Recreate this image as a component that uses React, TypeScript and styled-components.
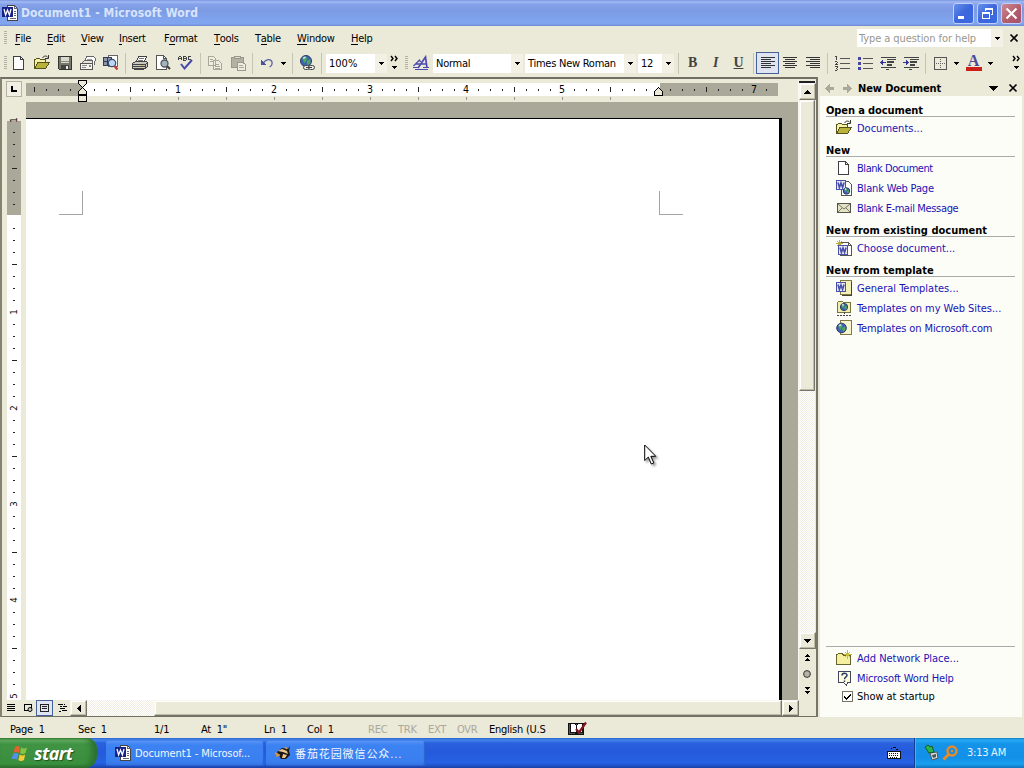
import React from 'react';
import styled, { createGlobalStyle, css } from 'styled-components';

const face = '#ebe9d8';
const ui = '"DejaVu Sans Condensed", "DejaVu Sans", "Noto Sans CJK SC", sans-serif';

const Global = createGlobalStyle`
  * { box-sizing: border-box; }
  html, body { margin: 0; padding: 0; }
  body { width: 1024px; height: 768px; overflow: hidden; background: ${face};
    font-family: ${ui}; font-size: 11px; letter-spacing: -0.25px; color: #000; cursor: default; }
`;

const Screen = styled.div`
  position: relative; width: 1024px; height: 768px; display: flex; flex-direction: column; overflow: hidden;
`;

/* ---------- shared ---------- */
const Glyph = styled.svg`
  display: block; flex: none; overflow: visible;
`;
const Label = styled.span<{ $ls?: number }>`
  white-space: pre; letter-spacing: ${p => p.$ls ?? -0.25}px;
`;
const dither = css`
  background: repeating-conic-gradient(#fff 0 25%, #f1eee3 0 50%) 0 0 / 2px 2px;
`;
const raised = css`
  background: ${face}; border: 1px solid; border-color: #f8f7f0 #77756a #77756a #f8f7f0;
  box-shadow: inset -1px -1px 0 #bdbaa8, inset 1px 1px 0 #fff;
`;

type IconProps = { children: React.ReactNode; w?: number; h?: number; smooth?: boolean };
const Icon = ({ children, w = 16, h = 16, smooth }: IconProps) => (
  <Glyph width={w} height={h} viewBox={`0 0 ${w} ${h}`} shapeRendering={smooth ? 'auto' : 'crispEdges'}>{children}</Glyph>
);

const Down = ({ big }: { big?: boolean }) => (
  <Icon w={9} h={5}><path d={big ? 'M0 0h9v1H0zM1 1h7v1H1zM2 2h5v1H2zM3 3h3v1H3zM4 4h1v1H4z' : 'M2 1h5v1H2zM3 2h3v1H3zM4 3h1v1H4z'} /></Icon>
);

/* ---------- icons ---------- */
const WordMark = ({ x = 0, y = 2, c = '#1c2a8c' }) => (
  <g>
    <rect x={x + 0.5} y={y + 0.5} width="9" height="9" fill="#e8eaf8" stroke={c} />
    <path d={`M${x + 2} ${y + 2.5}l1.400 5 1.600-4.500 1.600 4.500 1.500-5`} fill="none" stroke={c} strokeWidth="1.600" shapeRendering="auto" />
  </g>
);
const WordLogo = () => (
  <Icon>
    <path d="M5.500.5h7l3 3v12h-10z" fill="#fff" stroke="#444" />
    <path d="M12.500.5v3h3M12 6h2M12 8h2M12 10h2M8 13h6" fill="none" stroke="#667" />
    <rect x="0" y="2" width="11" height="10" fill="#16228a" />
    <path d="M2 4l1.600 6L5.500 5l1.900 5L9 4" fill="none" stroke="#fff" strokeWidth="1.300" shapeRendering="auto" />
  </Icon>
);
const PageIcon = () => (
  <Icon><path d="M2.500 1.500h7l3 3v10h-10z" fill="#fff" stroke="#3f3f46" /><path d="M9.500 1.500v3h3" fill="none" stroke="#3f3f46" /></Icon>
);
const FolderOpen = () => (
  <Icon>
    <path d="M.5 13.500v-9h1l1-1h3l1 1h5v3" fill="#f5f2a8" stroke="#55521c" />
    <path d="M.5 13.500l3.500-6h11.500l-4 6z" fill="#b9b33c" stroke="#55521c" />
    <path d="M8.500 3c1.500-2.500 4-2.500 5.500-.5M14.500 0v3.500H11" fill="none" stroke="#333" shapeRendering="auto" />
  </Icon>
);
const SaveIcon = () => (
  <Icon>
    <path d="M1.500 1.500h13v13h-12l-1-1z" fill="#77786b" stroke="#35352f" />
    <rect x="4" y="2" width="8" height="6" fill="#d9d8cd" /><path d="M4 6.500h8" stroke="#8a8a7d" />
    <rect x="4" y="10" width="8" height="4" fill="#45453f" /><rect x="9" y="11" width="2" height="3" fill="#eee" />
  </Icon>
);
const MailIcon = () => (
  <Icon>
    <path d="M4.500 6.500l2-5h7l2 2-1.500 7" fill="#fff" stroke="#666" /><path d="M7 4h5M6 6h5" stroke="#999" />
    <path d="M1.500 8.500l3-3h8v3z" fill="#e5e5df" stroke="#666" />
    <path d="M.5 8.500h12v6H.5z" fill="#f4f4ee" stroke="#555" /><path d="M2 10.500h5M2 12.500h4" stroke="#888" /><path d="M9 10h2v2H9z" fill="#888" />
  </Icon>
);
const SearchIcon = () => (
  <Icon>
    <path d="M5.500.5h9v11h-9z" fill="#fff" stroke="#666" />
    <path d="M.5 2.500h8v8h-8z" fill="#8c96a6" stroke="#333c58" /><path d="M1 6.500h7M4.500 3v7" stroke="#2c3672" />
    <circle cx="9" cy="8" r="3.700" fill="#b9d7f4" stroke="#3a4a6a" strokeWidth="1.200" shapeRendering="auto" />
    <path d="M11.500 11l3 3.500" stroke="#c43a38" strokeWidth="2.400" shapeRendering="auto" />
  </Icon>
);
const PrintIcon = () => (
  <Icon>
    <path d="M4.500 6.500l2-5h8l-2 5z" fill="#fff" stroke="#444" /><path d="M7 3.500h5M6 5.500h5" stroke="#777" />
    <path d="M.5 8.500l3-2h10.500l1.500 1v4l-2 2H.5z" fill="#c9c8bc" stroke="#444" />
    <path d="M1 9.500h12.500l2-2M13.500 9.500v4M1 11.500h12" fill="none" stroke="#444" />
    <path d="M2.500 13.500h9v1h-9z" fill="#fff" stroke="#444" /><path d="M9 10h2v1H9z" fill="#d2b73a" />
  </Icon>
);
const PreviewIcon = () => (
  <Icon>
    <path d="M1.500.5h7l3 3v11h-10z" fill="#fff" stroke="#555" /><path d="M8.500.5v3h3" fill="none" stroke="#555" />
    <circle cx="9.500" cy="8.500" r="3.500" fill="#9fb4c0" stroke="#555" strokeWidth="1.300" shapeRendering="auto" />
    <path d="M12 11l3 3" stroke="#444" strokeWidth="2.200" shapeRendering="auto" />
  </Icon>
);
const SpellIcon = () => (
  <Icon>
    <path d="M.5 5V2.500l1-1h1l1 1V5M.5 3.500h3M5.500 5V1M5 1.500h2.500M5 3H8M5 5h2.500M8 1.500v1M8.500 3v2M13 1.500h-2l-1 1v1l1 1h2" fill="none" stroke="#444" />
    <path d="M3 9l3.500 4.500L14 5" fill="none" stroke="#4848a8" strokeWidth="2" shapeRendering="auto" />
  </Icon>
);
const CopyIcon = () => (
  <Icon>
    <path d="M1.500 1.500h5l2 2v7h-7zM6.500 5.500h5l3 3v6h-8z" fill="#efede0" stroke="#aaa797" />
    <path d="M3 4.500h3M3 6.500h3M8 9.500h4M8 11.500h5M8 13h5" stroke="#aaa797" />
  </Icon>
);
const PasteIcon = () => (
  <Icon>
    <path d="M1.500 2.500h12v10h-12z" fill="#b4b1a2" stroke="#99968a" /><path d="M4.500 3.500v-2h6v2z" fill="#dedccd" stroke="#99968a" />
    <path d="M7.500 7.500h5l3 2v6h-8z" fill="#efede0" stroke="#99968a" /><path d="M9 10.500h4M9 12.500h5" stroke="#aaa797" />
  </Icon>
);
const UndoIcon = () => (
  <Icon>
    <path d="M4 8.500C7 3.500 12 3.500 13 7c.5 2.500-.5 4-2.500 5" fill="none" stroke="#5a62a0" strokeWidth="1.300" shapeRendering="auto" />
    <path d="M2 5v5h5z" fill="#4a5298" />
  </Icon>
);
const Globe = ({ cx = 7, cy = 6, r = 5.5 }) => (
  <g shapeRendering="auto">
    <circle cx={cx} cy={cy} r={r} fill="#3f63b4" stroke="#2c3a66" />
    <path d={`M${cx - r * 0.7} ${cy - r * 0.5}l${r * 0.7}-${r * 0.4} ${r * 0.2} ${r * 0.6}-${r * 0.5} ${r * 0.7}zM${cx + r * 0.1} ${cy}l${r * 0.7}-${r * 0.3}v${r * 0.7}l-${r * 0.5} ${r * 0.4}z`} fill="#4ea65e" />
    <path d={`M${cx - r * 0.5} ${cy - r * 0.5}l${r * 0.4}-${r * 0.2}`} stroke="#d8eefc" strokeWidth="1.500" />
  </g>
);
const LinkIcon = () => (
  <Icon>
    <Globe />
    <g fill="#e8e8e4" stroke="#444" shapeRendering="auto"><rect x="4.500" y="10.500" width="6" height="4" rx="2" /><rect x="9.500" y="10.500" width="6" height="4" rx="2" /><path d="M7 12.500h6" /></g>
  </Icon>
);
const StyleIcon = () => (
  <Icon>
    <g fill="none" stroke="#4a4ab0" strokeWidth="1.700" shapeRendering="auto">
      <path d="M5 13L12.500 2l1.500 11M7.500 9h6" /><path d="M.5 11L6.500 5l1 2M3 9h4" strokeWidth="1.300" />
    </g>
    <path d="M0 12.500h6M10 12.500h6M2 14.500h13" stroke="#4a4ab0" />
  </Icon>
);
const Lines = ({ rows }: { rows: [number, number][] }) => (
  <Icon><path d={rows.map(([x, w], i) => `M${x} ${2 + i * 2}h${w}v1h-${w}z`).join('')} fill="#333" /></Icon>
);
const NumberIcon = () => (
  <Icon>
    <path d="M6 3h10v1H6zM6 8h10v1H6zM6 13h10v1H6z" fill="#555" />
    <path d="M2 1h1v4H2zM1 1h1v1H1zM1 6h2v1H1zM3 7h1v1H3zM2 8h1v1H2zM1 9h3v1H1zM1 11h3v1H1zM3 12h1v1H3zM2 13h1v1H2zM3 14h1v1H3zM1 15h2v1H1z" fill="#444" />
  </Icon>
);
const BulletIcon = () => (
  <Icon><path d="M6 3h10v1H6zM6 8h10v1H6zM6 13h10v1H6z" fill="#555" /><path d="M1 2h3v3H1zM1 7h3v3H1zM1 12h3v3H1z" fill="#4545a8" /></Icon>
);
const IndentIcon = ({ right }: { right?: boolean }) => (
  <Icon>
    <path d="M1 2h15v1H1zM7 4h9v1H7zM7 6h7v2H7zM7 9h5v2H7zM1 12h15v1H1zM6 14h3v1H6z" fill="#444" />
    <path d={right ? 'M0 7h3v1H0zM3 5h1v5H3zM4 6h1v3H4zM5 7h1v1H5z' : 'M3 7h3v1H3zM2 5h1v5H2zM1 6h1v3H1zM0 7h1v1H0z'} fill="#3434a0" />
  </Icon>
);
const BorderIcon = () => (
  <Icon><path d="M2.500 2.500h12v12h-12z" fill="none" stroke="#555" /><path d="M8.500 4v10M4 8.500h10" stroke="#666" strokeDasharray="1 1" /></Icon>
);
const HelpIcon = () => (
  <Icon><path d="M2.500 1.500h12v11h-3l-1 3-3-3h-5z" fill="#fdfde0" stroke="#44475a" /><path d="M6 5.500C6 2.500 11 2.500 11 5.300 11 7 8.500 7 8.500 9.200M8.500 10.500v1.500" fill="none" stroke="#2c3a66" strokeWidth="1.500" shapeRendering="auto" /></Icon>
);
const EnvelopeIcon = () => (
  <Icon><path d="M1.500 3.500h13v9h-13z" fill="#e4e3c5" stroke="#55564a" /><path d="M2 4l6 5 6-5M2 12l4-4M14 12l-4-4" fill="none" stroke="#77786a" shapeRendering="auto" /></Icon>
);
const WebPageIcon = () => (
  <Icon>
    <path d="M5.500 1.500h7l3 3v11h-10z" fill="#fff" stroke="#555" /><WordMark x={0} y={0} c="#4850a8" /><Globe cx={10.5} cy={11} r={3.2} />
  </Icon>
);
const ChooseIcon = () => (
  <Icon>
    <path d="M4.500 2.500h8l3 3v10h-11z" fill="#fff" stroke="#555" /><path d="M12.500 2.500v3h3" fill="none" stroke="#555" />
    <path d="M3.500 0v7M0 3.500h7M1 1l5 5M6 1L1 6" stroke="#b5ac3c" /><WordMark x={2} y={5} c="#4850a8" />
  </Icon>
);
const TemplatesIcon = () => (
  <Icon><path d="M4.500.5h11v14h-11z" fill="#f3f1b8" stroke="#7d7a45" /><path d="M15.500 2v13.500H6" fill="none" stroke="#44442e" /><WordMark c="#4850a8" /></Icon>
);
const WebFolderIcon = () => (
  <Icon><path d="M1.500 12.500v-10l1-1h4l1 1h7v10z" fill="#f1eeb0" stroke="#77743e" /><Globe cx={8} cy={7} r={3.6} /><path d="M1 15h14M8 12v3" stroke="#444" strokeDasharray="2 1" /></Icon>
);
const GlobePageIcon = () => (
  <Icon><path d="M4.500.5h11v14h-11z" fill="#f7f5ce" stroke="#7d7a45" /><Globe cx={5.5} cy={8} r={4.8} /></Icon>
);
const NetFolderIcon = () => (
  <Icon>
    <path d="M.5 14.500v-10h1l1-1h4l1 2h7v9z" fill="#f4f0a0" stroke="#66632e" />
    <path d="M11.500 0v9M7.500 4.500h8.500M9 2l5 5M14 2L9 7" stroke="#c9bc3c" />
  </Icon>
);

/* ---------- title bar ---------- */
const TitleBar = styled.header`
  flex: none; height: 26px; display: flex; align-items: center; padding: 0 2px 0 2px;
  background: linear-gradient(#7a96e0 0, #a2baf4 2px, #86a2ea 4px, #7c9ae3 10px, #80a4ee 20px, #82a5ef 24px, #6c85cc 26px);
`;
const Title = styled.h1`
  flex: 1; margin: 0 0 0 3px; font: bold 12px "DejaVu Sans Condensed", sans-serif; color: #d8e4fa; letter-spacing: 0.1px;
`;
const Caption = styled.button<{ $close?: boolean }>`
  width: 21px; height: 21px; margin: 0 0 0 3px; padding: 0; border: 1px solid #c0cffb; border-radius: 3px; display: grid; place-items: center;
  background: ${p => (p.$close ? 'linear-gradient(135deg,#cc8a94,#b45c6c 55%,#a4506c)' : 'linear-gradient(135deg,#6690ec,#3c66dc 50%,#3b6ae0)')};
`;

/* ---------- menus and toolbars ---------- */
const MenuBar = styled.nav`
  flex: none; height: 24px; display: flex; align-items: center; background: ${face}; padding-left: 4px;
`;
const Grip = styled.i<{ $m?: string }>`
  flex: none; width: 3px; height: 14px; margin: ${p => p.$m ?? '0'};
  background: repeating-linear-gradient(#b4b1a0 0 1px, ${face} 1px 2px);
`;
const MenuItem = styled.a<{ $w: number }>`
  width: ${p => p.$w}px; white-space: nowrap; letter-spacing: -0.3px; line-height: 15px;
  & u { display: inline-block; height: 14px; line-height: 15px; text-decoration: none; border-bottom: 1px solid #000; vertical-align: top; }
`;
const HelpBox = styled.div`
  margin-left: auto; width: 146px; height: 18px; display: flex; align-items: center; justify-content: space-between;
  background: #fff; padding-left: 2px; color: #99978c;
`;
const ComboArrow = styled.span`
  width: 12px; height: 100%; display: grid; place-items: center; background: #f3f1e6;
`;
const CloseX = styled.span<{ $w?: number; $gap?: number }>`
  width: ${p => p.$w ?? 21}px; margin-left: ${p => p.$gap ?? 0}px; display: grid; place-items: center;
`;
const Cross = ({ s = 8, c = '#000', w = 1.7 }) => (
  <Icon w={s} h={s} smooth><path d={`M.5 .5L${s - 0.5} ${s - 0.5}M${s - 0.5} .5L.5 ${s - 0.5}`} stroke={c} strokeWidth={w} /></Icon>
);

const ToolBar = styled.div`
  flex: none; height: 27px; display: flex; align-items: center; background: ${face}; padding: 0 0 1px 4px;
`;
const Tool = styled.span<{ $on?: boolean; $w?: number }>`
  flex: none; width: ${p => p.$w ?? 23}px; height: 22px; display: grid; place-items: center;
  ${p => p.$on && css`background: #dfe5f0; border: 1px solid #44619c;`}
`;
const Sep = styled.i<{ $l?: number; $r?: number }>`
  flex: none; width: 1px; height: 21px; background: #c6c3b2; margin: 0 ${p => p.$r ?? 2}px 0 ${p => p.$l ?? 3}px;
`;
const Combo = styled.div<{ $w: number; $m?: string }>`
  flex: none; width: ${p => p.$w}px; height: 19px; margin: ${p => p.$m ?? '0'}; padding-left: 3px; background: #fff;
  display: flex; align-items: center; justify-content: space-between;
`;
const Letter = styled.span<{ $k: 'b' | 'i' | 'u' }>`
  font: bold 14px "Liberation Serif", serif; color: #44443e; line-height: 16px;
  ${p => p.$k === 'i' && 'font-style: italic;'} ${p => p.$k === 'u' && 'text-decoration: underline;'}
`;
const More = () => (
  <Icon w={9} h={14}><path d="M1 0l2 2.500L1 5M5 0l2 2.500L5 5" fill="none" stroke="#000" strokeWidth="1.400" shapeRendering="auto" /><path d="M2 10h5v1H2zM3 11h3v1H3zM4 12h1v1H4z" /></Icon>
);
const ColorA = styled.span`
  width: 16px; height: 16px; border-bottom: 4px solid #cc1f1a; font: bold 16px/11px "Liberation Serif", serif; color: #4a4a98; text-align: center;
`;

/* ---------- document area ---------- */
const Main = styled.main`flex: none; height: 640px; display: flex;`;
const Editor = styled.section`
  width: 818px; border-top: 2px solid #716f64; border-left: 2px solid #85836f; border-right: 2px solid #77756a;
  display: flex; flex-direction: column; background: ${face}; padding-top: 1px;
`;
const Upper = styled.div`height: 620px; display: flex;`;
const Canvas = styled.div`width: 796px; display: flex; flex-direction: column;`;
const RulerRow = styled.div`height: 22px; display: flex; align-items: flex-start;`;
const TabBox = styled.div`
  width: 16px; height: 16px; margin: 1px 4px 0 4px; border: 1px solid #b5b2a2; display: grid; place-items: center; background: #f1efe4;
`;
const RulerCol = styled.div`width: 752px; padding-top: 3px; position: relative;`;
const Scale = styled.div`
  height: 13px; padding-left: 2px; display: flex; overflow: hidden;
  background: linear-gradient(90deg, #aaa899 56px, #fff 56px 634px, #aaa899 634px);
`;
const Cell = styled.span`
  flex: none; width: 12px; height: 13px; display: grid; place-items: center; font-size: 10.500px; line-height: 13px; letter-spacing: 0;
`;
const Dot = styled.i<{ $tall?: boolean }>`width: 1px; height: ${p => (p.$tall ? 5 : 2)}px; background: #222;`;
const Tabs = styled.div`height: 4px; padding: 1px 0 0 104px; display: flex; gap: 47px; & i { width: 1px; height: 3px; background: #98968a; }`;
const Indent = styled.span<{ $x: number; $y: number }>`position: absolute; z-index: 1; left: ${p => p.$x}px; top: ${p => p.$y}px;`;

const PageRow = styled.div`flex: 1; display: flex; min-height: 0;`;
const VRuler = styled.div`
  width: 24px; padding: 12px 4px 0 5px; overflow: hidden;
`;
const VScale = styled.div`
  width: 14px; display: flex; flex-direction: column;
  background: linear-gradient(${face} 7px, #aaa899 7px 101px, #fff 101px);
`;
const VCell = styled.span`
  height: 12px; display: grid; place-items: center; font-size: 9.500px; line-height: 12px; letter-spacing: 0;
  & b { font-weight: normal; transform: rotate(-90deg); }
`;
const VDot = styled.i<{ $tall?: boolean }>`height: 1px; width: ${p => (p.$tall ? 5 : 2)}px; background: #222;`;
const Desk = styled.div`flex: 1; background: #aaa899; padding: 16px 16px 0 0;`;
const Page = styled.div`
  height: 100%; background: #fff; border-top: 1px solid #000; border-right: 3px solid #000;
  display: flex; justify-content: space-between; padding: 72px 96px 0 33px;
`;
const Corner = styled.i<{ $right?: boolean }>`
  width: 24px; height: 24px; border-bottom: 1px solid #a5a5a5;
  ${p => (p.$right ? 'border-left: 1px solid #a5a5a5;' : 'border-right: 1px solid #a5a5a5;')}
`;

const VScroll = styled.div`width: 18px; display: flex; flex-direction: column; padding-right: 1px; border-left: 1px solid #f8f7f0;`;
const SplitBar = styled.div`height: 3px; border-bottom: 2px solid #222; background: ${face};`;
const SBtn = styled.div<{ $w?: number; $h?: number }>`
  ${raised} flex: none; width: ${p => p.$w ?? 17}px; height: ${p => p.$h ?? 17}px; display: grid; place-items: center;
`;
const Thumb = styled.div<{ $w?: number; $h?: number }>`
  ${raised} flex: none; ${p => p.$w && `width: ${p.$w}px;`} ${p => p.$h && `height: ${p.$h}px;`}
`;
const Track = styled.div<{ $w?: number }>`${dither} ${p => (p.$w ? `width: ${p.$w}px;` : 'flex: 1;')}`;
const Browse = styled.div`height: 51px; display: flex; flex-direction: column; align-items: center; justify-content: space-around; padding: 1px 0 2px;`;

const HScroll = styled.div`height: 17px; display: flex; border-bottom: 1px solid #716f64;`;
const View = styled.span<{ $on?: boolean }>`
  width: 17px; height: 16px; display: grid; place-items: center; ${p => p.$on && css`background: #dfe5f2; border: 1px solid #44619c;`}
`;

/* ---------- task pane ---------- */
const Pane = styled.aside`width: 204px; margin-left: 2px; display: flex; flex-direction: column; padding: 3px 2px 0 0;`;
const PaneHead = styled.div`
  height: 16px; display: flex; align-items: center; padding: 0 0 0 4px; background: ${face}; margin-left: 1px;
`;
const PaneTitle = styled.strong`flex: 1; margin-left: 6px; letter-spacing: -0.1px;`;
const PaneBody = styled.div`flex: 1; background: #fdfdf8; padding: 2px 7px 0 6px; display: flex; flex-direction: column;`;
const Heading = styled.h2<{ $ls?: number }>`
  margin: 4px 0 1px; height: 15px; padding-top: 1px; border-bottom: 1px solid #aaa; font: bold 11px/15px ${ui}; letter-spacing: ${p => p.$ls ?? 0}px; white-space: nowrap;
`;
const Row = styled.a`
  height: 20px; padding-left: 10px; display: flex; align-items: center; gap: 5px; color: #1a12b4; white-space: nowrap;
`;
const PaneFoot = styled.div`margin-top: auto; border-top: 1px solid #aaa; padding-top: 1px; height: 71px;`;
const Startup = styled.label`display: flex; align-items: center; gap: 4px; height: 17px; padding-left: 16px;`;
const Box = styled.span`width: 11px; height: 11px; background: #fff; border: 1px solid #77756a; display: grid; place-items: center;`;

/* ---------- status bar and taskbar ---------- */
const StatusBar = styled.footer`flex: none; height: 21px; display: flex; align-items: center; padding: 3px 0 0 10px; background: ${face};`;
const Stat = styled.span<{ $w: number; $dim?: boolean }>`
  width: ${p => p.$w}px; white-space: pre; overflow: hidden; color: ${p => (p.$dim ? '#aca899' : '#000')};
`;
const TaskBar = styled.footer`
  flex: none; height: 30px; display: flex; align-items: center;
  background: linear-gradient(#2b62cf 0, #4386ec 2px, #2a61de 5px, #245adb 14px, #2663e4 25px, #1f4fc0 28px, #1941a5 30px);
`;
const Start = styled.button`
  width: 97px; height: 30px; margin: 0 9px 0 0; padding: 0 0 1px 11px; border: 0; border-radius: 0 10px 12px 0; display: flex; align-items: center; gap: 5px;
  background: linear-gradient(#3c8438 0, #6db769 2px, #409445 6px, #3b8f3e 20px, #3a9440 26px, #2b6c2d 30px);
  box-shadow: inset -5px 0 6px #2a7030; color: #fff; font: italic bold 18px "Open Sans", sans-serif; letter-spacing: -0.6px; text-shadow: 1px 1px 1px #24501f;
`;
const Task = styled.div<{ $w: number }>`
  width: ${p => p.$w}px; height: 25px; margin: 0 2px 0 0; border-radius: 2px; padding: 0 0 0 9px; display: flex; align-items: center; gap: 4px; color: #f2f7ff;
  background: linear-gradient(#5a95f5 0, #3c82f3 4px, #3a7ff0 20px, #3373e2 25px); box-shadow: inset -1px -1px 1px #2a62cc;
`;
const Tray = styled.div`
  width: 110px; height: 30px; padding: 0 0 1px 9px; display: flex; align-items: center; color: #e8f4ff; border-left: 1px solid #123e94; box-shadow: inset 1px 0 0 #3bb8f4;
  background: linear-gradient(#1380c8 0, #25aaf3 2px, #1493e8 6px, #1290e8 20px, #18a0ee 26px, #0d72bc 30px);
`;
const Clock = styled.time`margin-left: 8px; white-space: nowrap;`;
const Keyboard = styled.span`margin-left: auto; margin-right: 13px;`;
const Pointer = styled.div`position: absolute; left: 644px; top: 444px; filter: drop-shadow(2px 2px 1px rgba(0,0,0,.4));`;

const menus: [string, number, number][] = [
  ['File', 0, 32], ['Edit', 0, 34], ['View', 0, 38], ['Insert', 0, 45], ['Format', 1, 50], ['Tools', 0, 41], ['Table', 1, 42], ['Window', 0, 54], ['Help', 0, 40],
];

const mark = (n: number, offset: number) => {
  const k = n - offset;
  if (k % 8 === 0 && k !== 0) return Math.abs(k / 8);
  return k % 4 === 0 ? 'tall' : 'dot';
};

export default function App() {
  return (
    <Screen>
      <Global />
      <TitleBar>
        <WordLogo />
        <Title>Document1 - Microsoft Word</Title>
        <Caption><Icon w={13} h={13}><path d="M1 9h6v3H1z" fill="#fff" /></Icon></Caption>
        <Caption><Icon w={13} h={13}><path d="M4 1h8v7h-2V7h1V3H5v1H4zM1 5h8v7H1zM2 7v4h6V7z" fill="#fff" fillRule="evenodd" /></Icon></Caption>
        <Caption $close><Cross s={11} c="#fff" w={2.2} /></Caption>
      </TitleBar>

      <MenuBar>
        <Grip $m="0 8px 0 0" />
        {menus.map(([t, i, w]) => <MenuItem key={t} $w={w}>{t.slice(0, i)}<u>{t[i]}</u>{t.slice(i + 1)}</MenuItem>)}
        <HelpBox><Label $ls={-0.08}>Type a question for help</Label><ComboArrow><Down /></ComboArrow></HelpBox>
        <CloseX><Cross /></CloseX>
      </MenuBar>

      <ToolBar>
        <Grip />
        <Tool><PageIcon /></Tool><Tool><FolderOpen /></Tool><Tool><SaveIcon /></Tool><Tool><MailIcon /></Tool><Tool><SearchIcon /></Tool>
        <Sep />
        <Tool><PrintIcon /></Tool><Tool><PreviewIcon /></Tool><Tool><SpellIcon /></Tool>
        <Sep />
        <Tool><CopyIcon /></Tool><Tool><PasteIcon /></Tool>
        <Sep />
        <Tool><UndoIcon /></Tool><Tool $w={11}><Down /></Tool>
        <Sep />
        <Tool><LinkIcon /></Tool>
        <Sep />
        <Combo $w={61} $m="0 3px 0 2px"><Label $ls={0}>100%</Label><ComboArrow><Down /></ComboArrow></Combo>
        <More />
        <Grip $m="0 0 0 6px" />
        <Tool $w={25}><StyleIcon /></Tool>
        <Combo $w={90} $m="0 2px 0 0"><Label>Normal</Label><ComboArrow><Down /></ComboArrow></Combo>
        <Combo $w={111} $m="0 2px 0 0"><Label>Times New Roman</Label><ComboArrow><Down /></ComboArrow></Combo>
        <Combo $w={36}><Label>12</Label><ComboArrow><Down /></ComboArrow></Combo>
        <Sep $l={4} />
        <Tool><Letter $k="b">B</Letter></Tool><Tool><Letter $k="i">I</Letter></Tool><Tool><Letter $k="u">U</Letter></Tool>
        <Sep $r={2} />
        <Tool $on><Lines rows={[[1, 14], [1, 10], [1, 14], [1, 10], [1, 14], [1, 10]]} /></Tool>
        <Tool $w={22}><Lines rows={[[1, 14], [3, 10], [1, 14], [3, 10], [1, 14], [3, 10]]} /></Tool>
        <Tool><Lines rows={[[1, 14], [5, 10], [1, 14], [5, 10], [1, 14], [5, 10]]} /></Tool>
        <Sep />
        <Tool><NumberIcon /></Tool><Tool><BulletIcon /></Tool><Tool><IndentIcon /></Tool><Tool><IndentIcon right /></Tool>
        <Sep />
        <Tool><BorderIcon /></Tool><Tool $w={11}><Down /></Tool>
        <Tool><ColorA>A</ColorA></Tool><Tool $w={11}><Down /></Tool>
        <Tool $w={41}><More /></Tool>
      </ToolBar>

      <Main>
        <Editor>
          <Upper>
            <Canvas>
              <RulerRow>
                <TabBox><Icon w={6} h={6}><path d="M0 0h2v4h4v2H0z" /></Icon></TabBox>
                <RulerCol>
                  <Scale>
                    {Array.from({ length: 62 }, (_, n) => {
                      const m = n === 52 ? '' : mark(n, 4);
                      return <Cell key={n}>{n === 4 || m === '' ? null : m === 'tall' ? <Dot $tall /> : m === 'dot' ? <Dot /> : m}</Cell>;
                    })}
                  </Scale>
                  <Tabs>{Array.from({ length: 11 }, (_, n) => <i key={n} />)}</Tabs>
                  <Indent $x={52} $y={0}>
                    <Icon w={9} h={22}><path d="M.5.500h8v3l-4 4-4-4zM.5 14.500v-3l4-4 4 4v3zM.5 15.500h8v6h-8z" fill={face} stroke="#000" /></Icon>
                  </Indent>
                  <Indent $x={628} $y={7}>
                    <Icon w={9} h={9}><path d="M.5 8.500v-4l4-4 4 4v4z" fill={face} stroke="#000" /></Icon>
                  </Indent>
                </RulerCol>
              </RulerRow>
              <PageRow>
                <VRuler>
                  <VScale>
                    {Array.from({ length: 50 }, (_, n) => {
                      const m = mark(n, 8);
                      return <VCell key={n}>{n === 8 ? null : m === 'tall' ? <VDot $tall /> : m === 'dot' ? <VDot /> : <b>{m}</b>}</VCell>;
                    })}
                  </VScale>
                </VRuler>
                <Desk><Page><Corner /><Corner $right /></Page></Desk>
              </PageRow>
            </Canvas>
            <VScroll>
              <SplitBar />
              <SBtn><Icon w={7} h={4}><path d="M3 0h1v1H3zM2 1h3v1H2zM1 2h5v1H1zM0 3h7v1H0z" /></Icon></SBtn>
              <Thumb $h={291} />
              <Track />
              <SBtn><Icon w={7} h={4}><path d="M0 0h7v1H0zM1 1h5v1H1zM2 2h3v1H2zM3 3h1v1H3z" /></Icon></SBtn>
              <Browse>
                <Icon w={5} h={7}><path d="M2 0h1v1H2zM1 1h3v1H1zM0 2h5v1H0zM2 4h1v1H2zM1 5h3v1H1zM0 6h5v1H0z" /></Icon>
                <Icon w={8} h={8} smooth><circle cx="4" cy="4" r="3.400" fill="#b5b3a6" stroke="#333" /></Icon>
                <Icon w={5} h={7}><path d="M0 0h5v1H0zM1 1h3v1H1zM2 2h1v1H2zM0 4h5v1H0zM1 5h3v1H1zM2 6h1v1H2z" /></Icon>
              </Browse>
            </VScroll>
          </Upper>
          <HScroll>
            <View><Icon w={9} h={9}><path d="M1 0h8v1H1zM1 2h8v1H1zM1 4h8v1H1zM1 6h8v1H1z" /></Icon></View>
            <View><Icon w={9} h={9}><path d="M1.500 7V.5h7V4M1 6.500h4" fill="none" stroke="#000" /><circle cx="7" cy="5.500" r="2" fill="#ccc" stroke="#000" shapeRendering="auto" /></Icon></View>
            <View $on><Icon w={9} h={9}><path d="M.5.500h8v7h-8zM2 2.500h5M2 4.500h5" fill="none" stroke="#222" /></Icon></View>
            <View><Icon w={9} h={9}><path d="M1 0h5v1H1zM7 0h1v1H7zM3 2h2v1H3zM6 2h4v1H6zM3 4h5v1H3zM5 6h5v1H5zM2 7h2v1H2z" /></Icon></View>
            <SBtn $h={16}><Icon w={4} h={7}><path d="M3 0h1v7H3zM2 1h1v5H2zM1 2h1v3H1zM0 3h1v1H0z" /></Icon></SBtn>
            <Track $w={67} />
            <Thumb $w={628} />
            <SBtn $h={16}><Icon w={4} h={7}><path d="M0 0h1v7H0zM1 1h1v5H1zM2 2h1v3H2zM3 3h1v1H3z" /></Icon></SBtn>
          </HScroll>
        </Editor>

        <Pane>
          <PaneHead>
            <Icon w={27} h={9}><path d="M0 4.500L5 0v3h4v3H5v3zM27 4.500L22 0v3h-4v3h4v3z" fill="#aca899" /></Icon>
            <PaneTitle>New Document</PaneTitle>
            <Down big />
            <CloseX $w={19} $gap={5}><Cross /></CloseX>
          </PaneHead>
          <PaneBody>
            <Heading $ls={-0.1}>Open a document</Heading>
            <Row><FolderOpen /><Label $ls={0}>Documents...</Label></Row>
            <Heading>New</Heading>
            <Row><PageIcon /><Label $ls={-0.45}>Blank Document</Label></Row>
            <Row><WebPageIcon /><Label $ls={-0.18}>Blank Web Page</Label></Row>
            <Row><EnvelopeIcon /><Label $ls={-0.35}>Blank E-mail Message</Label></Row>
            <Heading>New from existing document</Heading>
            <Row><ChooseIcon /><Label $ls={-0.05}>Choose document...</Label></Row>
            <Heading>New from template</Heading>
            <Row><TemplatesIcon /><Label $ls={0}>General Templates...</Label></Row>
            <Row><WebFolderIcon /><Label $ls={-0.05}>Templates on my Web Sites...</Label></Row>
            <Row><GlobePageIcon /><Label $ls={-0.1}>Templates on Microsoft.com</Label></Row>
            <PaneFoot>
              <Row><NetFolderIcon /><Label $ls={-0.03}>Add Network Place...</Label></Row>
              <Row><HelpIcon /><Label $ls={-0.13}>Microsoft Word Help</Label></Row>
              <Startup><Box><Icon w={7} h={7}><path d="M0 2l2.500 3L7 .5v2.500L2.500 7 0 4.500z" /></Icon></Box><Label $ls={-0.05}>Show at startup</Label></Startup>
            </PaneFoot>
          </PaneBody>
        </Pane>
      </Main>

      <StatusBar>
        <Stat $w={68}>Page  1</Stat><Stat $w={76}>Sec  1</Stat><Stat $w={47}>1/1</Stat><Stat $w={63}>At  1"</Stat>
        <Stat $w={43}>Ln  1</Stat><Stat $w={61}>Col  1</Stat>
        <Stat $w={30} $dim>REC</Stat><Stat $w={30} $dim>TRK</Stat><Stat $w={29} $dim>EXT</Stat><Stat $w={32} $dim>OVR</Stat>
        <Stat $w={79}>English (U.S</Stat>
        <Icon w={19} h={14}>
          <path d="M.5 1.500h15v11H.5z" fill="#555" stroke="#111" />
          <path d="M2.500 10.500v-9h4l2 2v8l-2-1zM14.500 10.500v-9h-4l-2 2v8l2-1z" fill="#fff" stroke="#111" />
          <path d="M8 7l3 3.500L18 .5" fill="none" stroke="#841220" strokeWidth="2.200" shapeRendering="auto" />
        </Icon>
      </StatusBar>

      <TaskBar>
        <Start>
          <Icon w={18} h={18} smooth>
            <path d="M4 3q3-2 5 0L8 9Q5 7 2.500 9z" fill="#e8602c" /><path d="M10 3.500q3 2 6 0L14.500 9q-3 2-5.500 0z" fill="#86c440" />
            <path d="M2 10q3-2 5.500 0L6 15.500Q3 14 .5 15.500z" fill="#5590ec" /><path d="M8.700 10.500q3 2 5.500 0L13 16q-3 2-5.700 0z" fill="#f6ca32" />
          </Icon>
          start
        </Start>
        <Task $w={158}><WordLogo /><Label $ls={-0.1}>Document1 - Microsof...</Label></Task>
        <Task $w={159}>
          <Icon smooth>
            <path d="M2 7l5-4 6 1 2-3-1 5 1 4-4 4H6z" fill="#1c1814" /><path d="M3 6l4-2 5 2 1 3-5-2zM8 9l4 1-2 3H7z" fill="#ecc893" /><path d="M0 8l4 2M1 11l4-1M10 2l2 2" stroke="#d8943c" strokeWidth="1.500" />
          </Icon>
          <Label $ls={0.9}>番茄花园微信公众...</Label>
        </Task>
        <Keyboard>
          <Icon w={14} h={12}><path d="M4 1.500h1M6 .5h3M9 2.500h2" stroke="#000" /><path d="M.5 4.500h13v7H.5z" fill="#fff" stroke="#111" /><path d="M2 6.500h10M2 8.500h10M3 10.500h8" stroke="#111" strokeDasharray="1 1" /></Icon>
        </Keyboard>
        <Tray>
          <Icon w={18} h={16} smooth><path d="M6 8l7-1 1 6-6 2z" fill="#d8dcd4" stroke="#555" /><path d="M8 10l4-1v3l-3 1z" fill="#456" /><path d="M1 2l3-2 2 2 2-1 2 6-5 1z" fill="#2cb44c" stroke="#155c28" /></Icon>
          <Icon w={17} h={16} smooth><circle cx="10" cy="6" r="4.500" fill="none" stroke="#e88a28" strokeWidth="2.500" /><circle cx="10" cy="6" r="1.300" fill="#e88a28" /><path d="M6.500 9.500L1.500 14.500" stroke="#e88a28" strokeWidth="3" /></Icon>
          <Clock>3:13 AM</Clock>
        </Tray>
      </TaskBar>

      <Pointer>
        <Icon w={13} h={21} smooth><path d="M.7 1v15.500l3.600-3.400 3 6.900 2.500-1.100-3-6.600h5z" fill="#fff" stroke="#000" /></Icon>
      </Pointer>
    </Screen>
  );
}
